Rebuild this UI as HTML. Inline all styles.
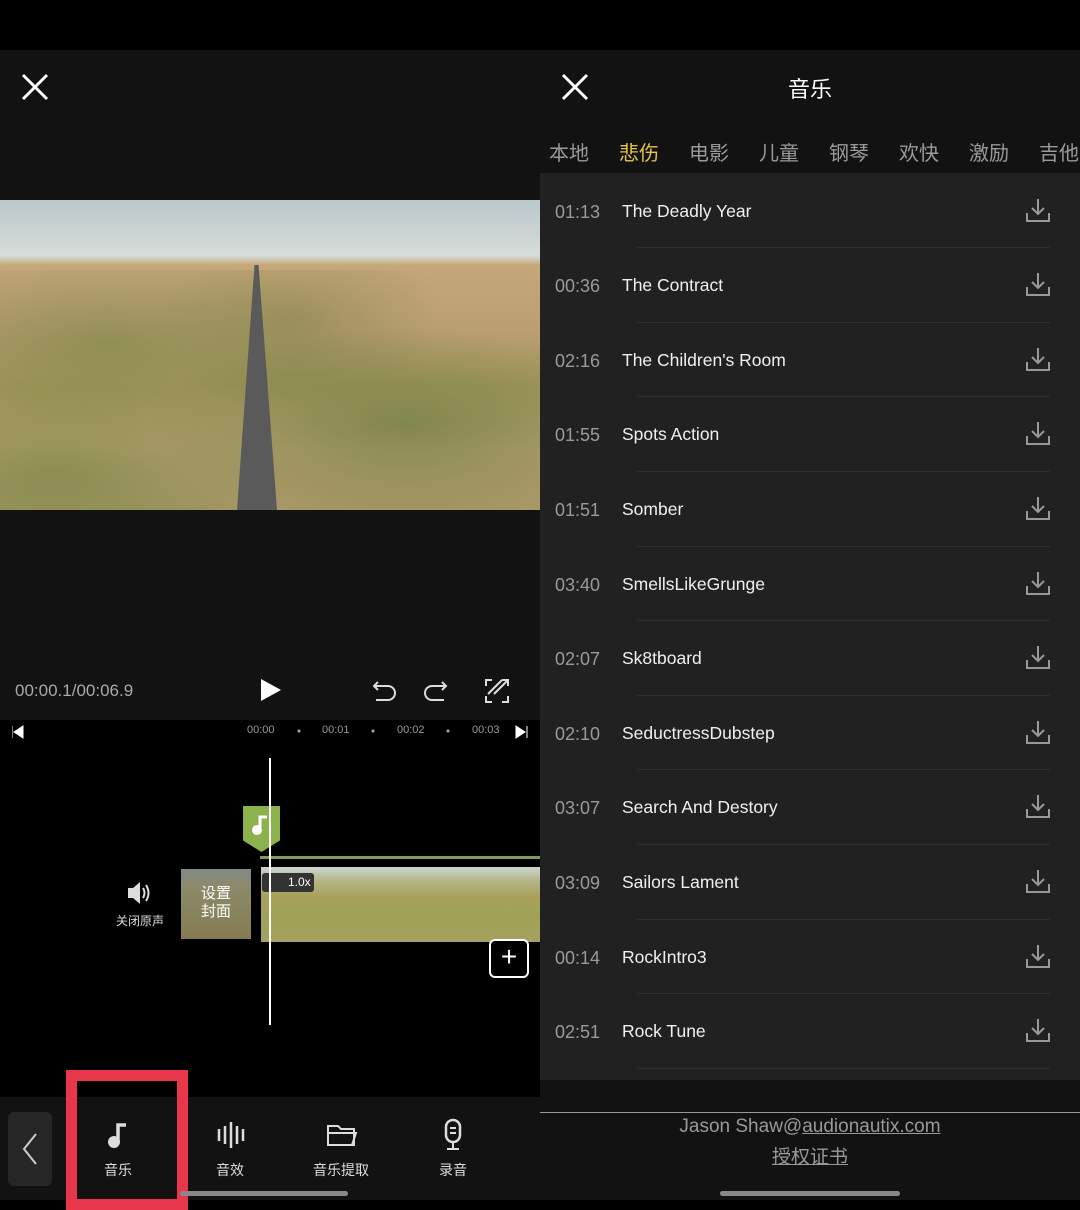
<!DOCTYPE html>
<html><head><meta charset="utf-8"><style>
*{margin:0;padding:0;box-sizing:border-box}
body{width:1080px;height:1200px;background:#000;position:relative;overflow:hidden;font-family:"Liberation Sans","Noto Sans CJK SC",sans-serif;color:#fff}
.a{position:absolute}
.row{position:absolute;left:540px;width:540px;height:74.6px}
.row .t{position:absolute;left:15px;top:28px;font-size:18px;color:#9a9a9a}
.row .n{position:absolute;left:82px;top:27px;font-size:17.5px;color:#f0f0f0}
.row .ln{position:absolute;left:97px;right:30px;bottom:0;height:1px;background:#303030}
.row svg{position:absolute;left:484px;top:22px}
.tab{position:absolute;top:137px;font-size:20px;color:#9a9a9a}
.tool{position:absolute;top:1160px;font-size:14px;color:#ddd;text-align:center}
</style></head><body>
<!-- left -->
<div class="a" style="left:0;top:50px;width:540px;height:670px;background:#121212"></div>
<svg class="a" style="left:20px;top:72px" width="30" height="30"><path d="M3 3L27 27M27 3L3 27" stroke="#fff" stroke-width="3"/></svg>
<div class="a" style="left:0;top:200px;width:540px;height:310px;background:linear-gradient(180deg,#b9c8cc 0%,#d7dcda 18%,#c6a878 21%,#bca071 40%,#a89860 60%,#b8a070 80%,#a99868 100%)"></div>
<div class="a" style="left:0;top:270px;width:540px;height:240px;background:radial-gradient(ellipse at 20% 30%,rgba(90,120,50,.4),transparent 40%),radial-gradient(ellipse at 75% 65%,rgba(70,110,40,.45),transparent 45%),radial-gradient(ellipse at 10% 85%,rgba(80,120,40,.4),transparent 35%),radial-gradient(ellipse at 55% 20%,rgba(90,110,50,.3),transparent 35%)"></div>
<div class="a" style="left:232px;top:265px;width:50px;height:245px;background:#5a5a5a;clip-path:polygon(45% 0,53% 0,90% 100%,10% 100%)"></div>
<div class="a" style="left:0;top:681px;left:15px;font-size:17px;color:#aaa">00:00.1/00:06.9</div>
<svg class="a" style="left:258px;top:677px" width="26" height="26"><path d="M3 2L23 13L3 24Z" fill="#fff"/></svg>
<svg class="a" style="left:370px;top:676px" width="140" height="30"><path d="M8 6L4 10L8 14M4 10H18A7 7 0 0 1 18 24H6" fill="none" stroke="#ddd" stroke-width="2"/><path d="M72 6L76 10L72 14M76 10H62A7 7 0 0 0 62 24H74" fill="none" stroke="#ddd" stroke-width="2"/><path d="M116 10V4H122M132 4L118 18M138 4L124 18M116 20V26H122M138 20V26H132M132 4H138V10" fill="none" stroke="#ddd" stroke-width="2"/></svg>
<div class="a" style="left:0;top:720px;width:540px;height:378px;background:#000"></div>
<svg class="a" style="left:12px;top:725px" width="520" height="14"><path d="M0 1V13M2 7L11 1V13Z" fill="#fff" stroke="#fff"/><path d="M504 1L513 7L504 13ZM515 1V13" fill="#fff" stroke="#fff"/><circle cx="287" cy="6" r="1.5" fill="#aaa"/><circle cx="361" cy="6" r="1.5" fill="#aaa"/><circle cx="436" cy="6" r="1.5" fill="#aaa"/></svg>
<div class="a" style="left:247px;top:724px;font-size:11px;color:#999">00:00</div>
<div class="a" style="left:322px;top:724px;font-size:11px;color:#999">00:01</div>
<div class="a" style="left:397px;top:724px;font-size:11px;color:#999">00:02</div>
<div class="a" style="left:472px;top:724px;font-size:11px;color:#999">00:03</div>
<div class="a" style="left:243px;top:806px;width:37px;height:46px;background:#8cb24e;clip-path:polygon(0 0,100% 0,100% 75%,50% 100%,0 75%)"></div>
<svg class="a" style="left:248px;top:812px" width="26" height="26"><circle cx="9" cy="18" r="5" fill="#fff"/><path d="M12 18V5H19" stroke="#fff" stroke-width="3" fill="none"/></svg>
<div class="a" style="left:260px;top:856px;width:280px;height:3px;background:#7f9a5c"></div>
<svg class="a" style="left:126px;top:880px" width="28" height="26"><path d="M2 8H7L14 2V24L7 18H2Z" fill="#ddd"/><path d="M17 8Q20 13 17 18M20 5Q25 13 20 21" fill="none" stroke="#ddd" stroke-width="2"/></svg>
<div class="a" style="left:116px;top:912px;font-size:12px;color:#ddd">关闭原声</div>
<div class="a" style="left:181px;top:869px;width:70px;height:70px;background:linear-gradient(180deg,#7f8a88 0%,#8c8a6a 25%,#867c52 100%)"></div>
<div class="a" style="left:181px;top:885px;width:70px;text-align:center;font-size:15px;line-height:18px;color:#fff">设置<br>封面</div>
<div class="a" style="left:261px;top:867px;width:279px;height:75px;background:linear-gradient(180deg,#cbd6d4 0%,#b6b68a 18%,#a8a05a 40%,#9ea256 70%,#a8a060 100%)"></div>
<div class="a" style="left:262px;top:873px;width:52px;height:19px;background:#333;border-radius:3px;font-size:12px;color:#fff;padding:2px 0 0 26px">1.0x</div>
<div class="a" style="left:269px;top:758px;width:2px;height:267px;background:#fff"></div>
<div class="a" style="left:489px;top:939px;width:40px;height:39px;border:2px solid #fff;border-radius:6px;background:#000;font-size:28px;line-height:32px;text-align:center;color:#fff">+</div>
<div class="a" style="left:0;top:1097px;width:540px;height:103px;background:#121212"></div>
<div class="a" style="left:8px;top:1112px;width:44px;height:74px;background:#262626;border-radius:6px"></div>
<svg class="a" style="left:20px;top:1132px" width="20" height="34"><path d="M16 2L4 17L16 32" fill="none" stroke="#ccc" stroke-width="2"/></svg>
<svg class="a" style="left:104px;top:1120px" width="28" height="30"><circle cx="10" cy="22" r="6" fill="#ddd"/><path d="M14 22V5H22" stroke="#ddd" stroke-width="3.5" fill="none"/></svg>
<div class="tool" style="left:104px">音乐</div>
<svg class="a" style="left:216px;top:1120px" width="30" height="30"><path d="M3 9V21M9 6V24M15 2V28M21 6V24M27 9V21" stroke="#ddd" stroke-width="2.5"/></svg>
<div class="tool" style="left:216px">音效</div>
<svg class="a" style="left:326px;top:1122px" width="32" height="26"><path d="M2 4H12L15 7H28V23H2Z M2 11H30L26 23" fill="none" stroke="#ddd" stroke-width="2"/></svg>
<div class="tool" style="left:313px">音乐提取</div>
<svg class="a" style="left:441px;top:1118px" width="24" height="34"><rect x="5" y="2" width="14" height="22" rx="7" fill="none" stroke="#ddd" stroke-width="2.5"/><path d="M9 10H15M9 15H15M12 24V31M6 31H18" stroke="#ddd" stroke-width="2"/></svg>
<div class="tool" style="left:439px">录音</div>
<div class="a" style="left:66px;top:1070px;width:122px;height:140px;border:11px solid #e8374a"></div>
<div class="a" style="left:180px;top:1191px;width:168px;height:5px;background:#888;border-radius:3px"></div>
<!-- right -->
<div class="a" style="left:540px;top:50px;width:540px;height:1150px;background:#121212"></div>
<svg class="a" style="left:560px;top:72px" width="30" height="30"><path d="M3 3L27 27M27 3L3 27" stroke="#fff" stroke-width="3"/></svg>
<div class="a" style="left:788px;top:72px;font-size:22px;color:#fff">音乐</div>
<div class="tab" style="left:549px">本地</div>
<div class="tab" style="left:619px;color:#e8c54a">悲伤</div>
<div class="tab" style="left:689px">电影</div>
<div class="tab" style="left:759px">儿童</div>
<div class="tab" style="left:829px">钢琴</div>
<div class="tab" style="left:899px">欢快</div>
<div class="tab" style="left:969px">激励</div>
<div class="tab" style="left:1039px">吉他</div>
<div class="a" style="left:540px;top:173px;width:540px;height:907px;background:#212121"></div>
<div class="a" style="left:540px;top:1112px;width:540px;height:1px;background:#999"></div>
<div class="a" style="left:540px;top:1116px;width:540px;text-align:center;font-size:19px;color:#999">Jason Shaw@<u>audionautix.com</u></div>
<div class="a" style="left:540px;top:1142px;width:540px;text-align:center;font-size:19px;color:#999"><u>授权证书</u></div>
<div class="a" style="left:720px;top:1191px;width:180px;height:5px;background:#888;border-radius:3px"></div>
<div class="row" style="top:173.6px"><span class="t">01:13</span><span class="n">The Deadly Year</span><div class="ln"></div><svg width="28" height="28"><path d="M14 3V18M8 12L14 18L20 12M3 17V25H25V17" fill="none" stroke="#999" stroke-width="2"/></svg></div>
<div class="row" style="top:248.2px"><span class="t">00:36</span><span class="n">The Contract</span><div class="ln"></div><svg width="28" height="28"><path d="M14 3V18M8 12L14 18L20 12M3 17V25H25V17" fill="none" stroke="#999" stroke-width="2"/></svg></div>
<div class="row" style="top:322.8px"><span class="t">02:16</span><span class="n">The Children's Room</span><div class="ln"></div><svg width="28" height="28"><path d="M14 3V18M8 12L14 18L20 12M3 17V25H25V17" fill="none" stroke="#999" stroke-width="2"/></svg></div>
<div class="row" style="top:397.4px"><span class="t">01:55</span><span class="n">Spots Action</span><div class="ln"></div><svg width="28" height="28"><path d="M14 3V18M8 12L14 18L20 12M3 17V25H25V17" fill="none" stroke="#999" stroke-width="2"/></svg></div>
<div class="row" style="top:472px"><span class="t">01:51</span><span class="n">Somber</span><div class="ln"></div><svg width="28" height="28"><path d="M14 3V18M8 12L14 18L20 12M3 17V25H25V17" fill="none" stroke="#999" stroke-width="2"/></svg></div>
<div class="row" style="top:546.6px"><span class="t">03:40</span><span class="n">SmellsLikeGrunge</span><div class="ln"></div><svg width="28" height="28"><path d="M14 3V18M8 12L14 18L20 12M3 17V25H25V17" fill="none" stroke="#999" stroke-width="2"/></svg></div>
<div class="row" style="top:621.2px"><span class="t">02:07</span><span class="n">Sk8tboard</span><div class="ln"></div><svg width="28" height="28"><path d="M14 3V18M8 12L14 18L20 12M3 17V25H25V17" fill="none" stroke="#999" stroke-width="2"/></svg></div>
<div class="row" style="top:695.8px"><span class="t">02:10</span><span class="n">SeductressDubstep</span><div class="ln"></div><svg width="28" height="28"><path d="M14 3V18M8 12L14 18L20 12M3 17V25H25V17" fill="none" stroke="#999" stroke-width="2"/></svg></div>
<div class="row" style="top:770.4px"><span class="t">03:07</span><span class="n">Search And Destory</span><div class="ln"></div><svg width="28" height="28"><path d="M14 3V18M8 12L14 18L20 12M3 17V25H25V17" fill="none" stroke="#999" stroke-width="2"/></svg></div>
<div class="row" style="top:845px"><span class="t">03:09</span><span class="n">Sailors Lament</span><div class="ln"></div><svg width="28" height="28"><path d="M14 3V18M8 12L14 18L20 12M3 17V25H25V17" fill="none" stroke="#999" stroke-width="2"/></svg></div>
<div class="row" style="top:919.6px"><span class="t">00:14</span><span class="n">RockIntro3</span><div class="ln"></div><svg width="28" height="28"><path d="M14 3V18M8 12L14 18L20 12M3 17V25H25V17" fill="none" stroke="#999" stroke-width="2"/></svg></div>
<div class="row" style="top:994.2px"><span class="t">02:51</span><span class="n">Rock Tune</span><div class="ln"></div><svg width="28" height="28"><path d="M14 3V18M8 12L14 18L20 12M3 17V25H25V17" fill="none" stroke="#999" stroke-width="2"/></svg></div>
</body></html>
